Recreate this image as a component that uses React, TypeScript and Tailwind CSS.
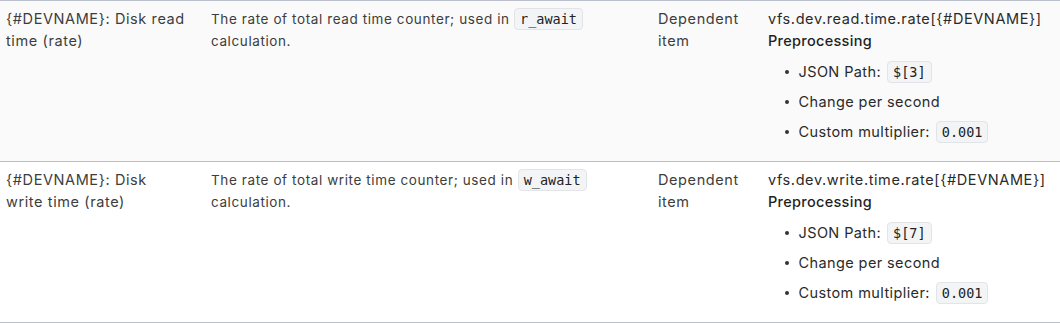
import React from "react";

const sans = "font-['Inter','Noto_Sans',sans-serif]";

const Code = ({ children }: { children: React.ReactNode }) => (
  <code className="inline-block rounded-[4px] border border-[#e2e4e8] bg-[#f3f4f5] px-[5px] font-['DejaVu_Sans_Mono',monospace] text-[13.5px] leading-[20px] tracking-normal text-[#222]">
    {children}
  </code>
);

type Row = {
  name: string;
  desc: string;
  code: string;
  type: string;
  key: string;
  path: string;
  mult: string;
  bg: string;
};

const rows: Row[] = [
  {
    name: "{#DEVNAME}: Disk read time (rate)",
    desc: "The rate of total read time counter; used in",
    code: "r_await",
    type: "Dependent item",
    key: "vfs.dev.read.time.rate[{#DEVNAME}]",
    path: "$[3]",
    mult: "0.001",
    bg: "bg-[#fafafa]",
  },
  {
    name: "{#DEVNAME}: Disk write time (rate)",
    desc: "The rate of total write time counter; used in",
    code: "w_await",
    type: "Dependent item",
    key: "vfs.dev.write.time.rate[{#DEVNAME}]",
    path: "$[7]",
    mult: "0.001",
    bg: "bg-white",
  },
];

const Bullet = ({ children }: { children: React.ReactNode }) => (
  <li className="flex h-[30px] items-center tracking-[0.4px]">
    <span className="ml-[17px] mr-[10px] h-[3.5px] w-[3.5px] rounded-full bg-[#333]" />
    <span className="flex items-center gap-[6px]">{children}</span>
  </li>
);

export default function App() {
  return (
    <div className={`w-[1060px] bg-white ${sans} tracking-[0.6px]`}>
      <div className="border-t border-[#b9c0cc]">
        {rows.map((r) => (
          <div
            key={r.key}
            className={`grid grid-cols-[205px_447px_110px_298px] border-b border-[#b9c0cc] ${r.bg}`}
          >
            <div className="py-[7px] pl-[6px] pr-[19px] text-[14.5px] leading-[22px] text-[#3d3d3d]">
              {r.name}
            </div>
            <div className="px-[6px] py-[7px] text-[13.5px] leading-[22px] text-[#3d3d3d]">
              {r.desc} <Code>{r.code}</Code> calculation.
            </div>
            <div className="px-[6px] py-[7px] text-[14.5px] leading-[22px] text-[#3d3d3d]">
              {r.type}
            </div>
            <div className="px-[6px] pb-[14px] pt-[7px] text-[14.5px] leading-[22px] text-[#2a2a2a]">
              <div>{r.key}</div>
              <div className="font-medium tracking-[0.3px] text-[#1f1f1f]">Preprocessing</div>
              <ul className="mt-[5px]">
                <Bullet>
                  JSON Path: <Code>{r.path}</Code>
                </Bullet>
                <Bullet>Change per second</Bullet>
                <Bullet>
                  Custom multiplier: <Code>{r.mult}</Code>
                </Bullet>
              </ul>
            </div>
          </div>
        ))}
      </div>
    </div>
  );
}
